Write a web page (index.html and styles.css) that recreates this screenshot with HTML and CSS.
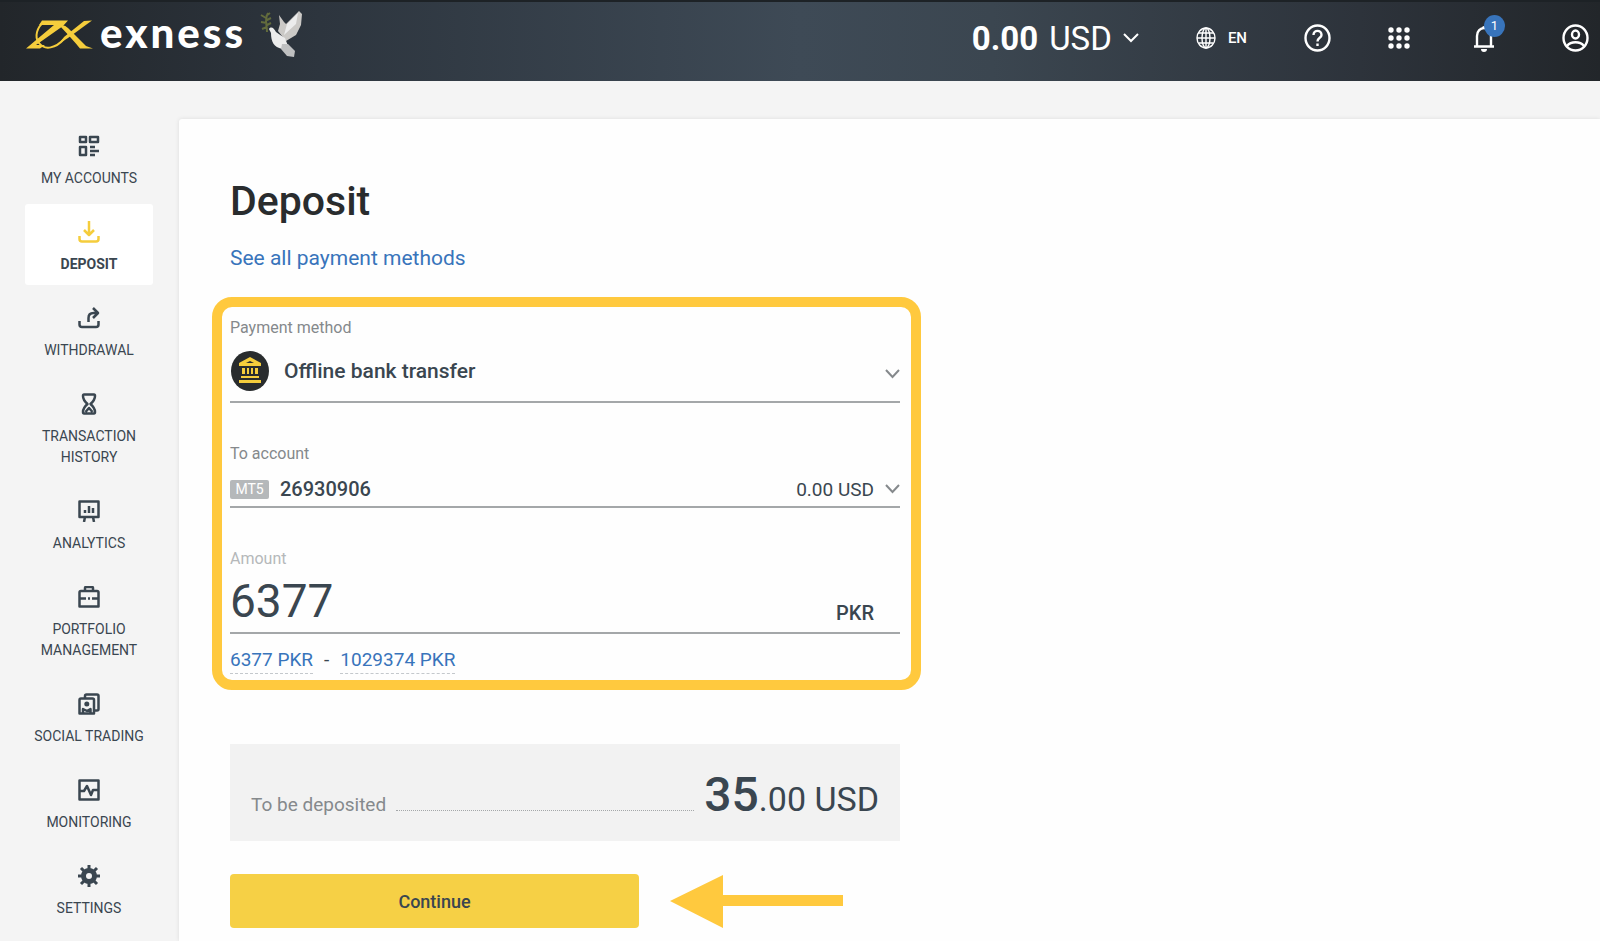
FILE: index.html
```html
<!DOCTYPE html>
<html lang="en">
<head>
    <meta charset="utf-8">
    <meta name="viewport" content="width=device-width, initial-scale=1">
    <title>Deposit</title>
    <link rel="stylesheet" href="styles.css">
</head>
<body>
    <header class="topbar">
        <a class="logo" href="#" aria-label="exness">
            <svg class="logo-mark" width="68" height="32" viewBox="26 18 68 32">
                <path d="M42 20.500H68L63 26L36 45H45L40 48.500H26L54 25H39Z" fill="#f5cd3c"/>
                <path d="M60 26Q64 24 68 28L86 46L93 48.500H80Q74 41 60 26Z" fill="#f5cd3c"/>
                <path d="M92 20.500L84 21L64 37L60 43L68 38Z" fill="#f5cd3c"/>
                <path d="M44 22C37 27 34 37 39 43C45 51 56 48 64 39" fill="none" stroke="#f5cd3c" stroke-width="2"/>
            </svg>
            <span class="logo-text">exness</span>
            <svg class="dove" width="43" height="48" viewBox="0 0 43 48">
                <path d="M18 21L20 14L19 5L24 12L26 14L39 1L42 4L41 15L36 25L26 31Z" fill="#cbc9c6"/>
                <path d="M24 25L27 14L38 3L36 14ZM9 19C11 16 14 18 16 22Q20 25 25 28L28 36L22 39C14 37 11 32 11 23Z" fill="#ececec"/>
                <path d="M22 34L28 34L35 41L34 47L27 46L21 39Z" fill="#bfc0c1"/>
                <path d="M7 22C7 14 4 10 8 3M6 8L1 5M7 13L1 12M7 17L2 19M7 10L11 8M6 6L10 3M7 15L11 13" stroke="#626b3c" stroke-width="2" fill="none"/>
            </svg>
        </a>
        <nav class="tools" aria-label="Account tools">
            <button class="balance"><b>0.00</b> USD
                <svg width="16" height="10" viewBox="0 0 16 10"><path d="M1 1L8 8L15 1"/></svg>
            </button>
            <button class="lang">
                <svg width="20" height="22" viewBox="0 0 20 22"><ellipse cx="10" cy="11" rx="9" ry="10"/><ellipse cx="10" cy="11" rx="4" ry="10"/><path d="M10 1V21M1 11H19M2.500 6H17.500M2.500 16H17.500"/></svg>
                EN
            </button>
            <button class="tool" aria-label="Help">
                <svg width="27" height="28" viewBox="0 0 27 28"><ellipse cx="13.500" cy="14" rx="12" ry="12.500"/><path d="M9.500 11C9.500 5.500 17.500 5.500 17.500 11C17.500 14 13.500 13.500 13.500 17.500M13.500 19.500V22"/></svg>
            </button>
            <button class="tool" aria-label="Apps">
                <svg class="filled" width="22" height="22" viewBox="0 0 22 22"><circle cx="3" cy="3" r="2.700"/><circle cx="11" cy="3" r="2.700"/><circle cx="19" cy="3" r="2.700"/><circle cx="3" cy="11" r="2.700"/><circle cx="11" cy="11" r="2.700"/><circle cx="19" cy="11" r="2.700"/><circle cx="3" cy="19" r="2.700"/><circle cx="11" cy="19" r="2.700"/><circle cx="19" cy="19" r="2.700"/></svg>
            </button>
            <button class="tool bell" aria-label="Notifications">
                <svg width="22" height="28" viewBox="0 0 22 28"><path d="M1 22.500H21M4 22V12C4 1.500 18 1.500 18 12V22"/><path d="M8 25H14A3 3 0 0 1 8 25ZM9 4A2 2 0 0 1 13 4Z" fill="#fff" stroke="none"/></svg>
                <span class="badge">1</span>
            </button>
            <button class="tool" aria-label="Profile">
                <svg width="27" height="28" viewBox="0 0 27 28"><ellipse cx="13.500" cy="14" rx="12" ry="12.500"/><ellipse cx="13.500" cy="10.500" rx="3.500" ry="4"/><path d="M5 22C9 17 18 17 22 22"/></svg>
            </button>
        </nav>
    </header>

    <div class="page">
        <nav class="sidebar" aria-label="Main">
            <a class="item" href="#">
                <svg width="22" height="22" viewBox="0 0 22 22"><path d="M2 2H8V7H2ZM12 2H20V7H12ZM2 12H8V20H2ZM12 12H17M12 16H21M12 20H17"/></svg>
                My accounts
            </a>
            <a class="item active" href="#" aria-current="page">
                <svg width="22" height="22" viewBox="0 0 22 22"><path d="M11 0V13M6 9L11 14L16 9M1.500 15V18Q1.500 20.500 4 20.500H18Q20.500 20.500 20.500 18V15"/></svg>
                Deposit
            </a>
            <a class="item" href="#">
                <svg width="22" height="22" viewBox="0 0 22 22"><path d="M10.500 15V11Q10.500 6 15.500 6H20M15 1L20 6L15 11M1.500 14V17.500Q1.500 20 4 20H18Q20.500 20 20.500 17.500V14"/></svg>
                Withdrawal
            </a>
            <a class="item" href="#">
                <svg width="22" height="22" viewBox="0 0 22 22"><path d="M6 1.500H16Q17 1.500 17 3Q17 7 12.500 11Q17 15 17 19Q17 20.500 16 20.500H6Q5 20.500 5 19Q5 15 9.500 11Q5 7 5 3Q5 1.500 6 1.500ZM7.500 19L11 15L14.500 19"/></svg>
                Transaction history
            </a>
            <a class="item" href="#">
                <svg width="22" height="22" viewBox="0 0 22 22"><path d="M1.500 1.500H20.500V17H1.500ZM7 17L6 22M15 17L16 22M7 10V13M11 6V13M15 8V13"/></svg>
                Analytics
            </a>
            <a class="item" href="#">
                <svg width="22" height="22" viewBox="0 0 22 22"><path d="M3 5H19Q20.500 5 20.500 6.500V20.500H1.500V6.500Q1.500 5 3 5ZM7 5V2Q7 1 8 1H14Q15 1 15 2V5M2 12.500H8M10 12.500H12M14 12.500H20"/></svg>
                Portfolio management
            </a>
            <a class="item" href="#">
                <svg width="22" height="22" viewBox="0 0 22 22"><path d="M7 5V3Q7 1.500 8.500 1.500H19Q20.500 1.500 20.500 3V16Q20.500 17.500 19 17.500H17M3 5.500H14.500Q16 5.500 16 7V20.500H1.500V7Q1.500 5.500 3 5.500Z"/><circle cx="8.800" cy="11" r="2.500" fill="#3a4650" stroke="none"/><path d="M5 20V16L9 18L12.500 16V20"/></svg>
                Social trading
            </a>
            <a class="item" href="#">
                <svg width="22" height="22" viewBox="0 0 22 22"><path d="M1.500 1.500H20.500V20.500H1.500ZM2 12H6L9 7L13 16L15 11H20"/></svg>
                Monitoring
            </a>
            <a class="item" href="#">
                <svg width="22" height="22" viewBox="0 0 22 22"><circle cx="11" cy="11" r="5.500" stroke-width="5"/><path d="M11 0V4M11 18V22M0 11H4M18 11H22M3 3L6 6M16 16L19 19M3 19L6 16M16 6L19 3" stroke-width="3"/></svg>
                Settings
            </a>
        </nav>

        <main class="panel">
            <form class="deposit">
                <h1>Deposit</h1>
                <a class="methods" href="#">See all payment methods</a>

                <div class="fields">
                    <label class="caption" for="method">Payment method</label>
                    <div class="row row-method">
                        <svg class="bank" width="38" height="40" viewBox="0 0 38 40">
                            <ellipse cx="19" cy="20" rx="19" ry="20" fill="#292c2e"/>
                            <path d="M19 6L30 12V15H8V12ZM11 17H14V23H11ZM16 17H18V23H16ZM20 17H22V23H20ZM24 17H27V23H24ZM10 25H28V27H10ZM8 29H30V32H8Z" fill="#f5cd3c"/>
                            <path d="M15 12L19 10L23 12Z" fill="#292c2e"/>
                        </svg>
                        <select id="method"><option>Offline bank transfer</option></select>
                        <svg class="chevron" width="15" height="10" viewBox="0 0 15 10"><path d="M1 1L7.500 8L14 1"/></svg>
                    </div>

                    <label class="caption" for="account">To account</label>
                    <div class="row row-account">
                        <span class="tag">MT5</span>
                        <select id="account"><option>26930906</option></select>
                        <span class="funds">0.00 USD</span>
                        <svg class="chevron" width="15" height="10" viewBox="0 0 15 10"><path d="M1 1L7.500 8L14 1"/></svg>
                    </div>

                    <label class="caption light" for="amount">Amount</label>
                    <div class="row row-amount">
                        <input id="amount" type="text" inputmode="numeric" value="6377">
                        <span class="currency">PKR</span>
                    </div>
                    <div class="limits">
                        <button type="button">6377 PKR</button>
                        <span>-</span>
                        <button type="button">1029374 PKR</button>
                    </div>
                </div>

                <div class="summary">
                    <span>To be deposited</span>
                    <span class="leader"></span>
                    <span class="total"><b>35</b>.00 USD</span>
                </div>

                <div class="actions">
                    <button class="continue" type="submit">Continue</button>
                    <svg class="arrow" width="173" height="54" viewBox="0 0 173 54"><path d="M0 27L53 1V21H173V32H53V54Z" fill="#ffc93e"/></svg>
                </div>
            </form>
        </main>
    </div>
</body>
</html>
```
FILE: styles.css
```css
* {
    box-sizing: border-box;
}
body {
    margin: 0;
    min-height: 100vh;
    display: flex;
    flex-direction: column;
    font-family: Roboto, "Liberation Sans", sans-serif;
    color: #3a4650;
    background: #f4f4f4;
}
button, select, input {
    font: inherit;
    color: inherit;
    border: none;
    background: none;
    padding: 0;
    margin: 0;
    cursor: pointer;
}
svg {
    display: block;
    flex: none;
}
a {
    text-decoration: none;
}

/* top bar */
.topbar {
    display: flex;
    justify-content: space-between;
    align-items: flex-start;
    height: 81px;
    padding: 0 11px 0 26px;
    color: #fff;
    background: linear-gradient(to right, #22262a, #2d353e 20%, #3e4a56 50%, #3b4650 62%, #2d333b 85%, #22262a);
    border-top: 2px solid #1d2226;
}
.logo {
    display: flex;
    align-items: center;
    gap: 6px;
    padding-top: 8px;
    color: #fff;
}
.logo-text {
    font-family: Lato, sans-serif;
    font-weight: 900;
    font-size: 42px;
    line-height: 40px;
    letter-spacing: 3px;
    padding-bottom: 4px;
}
.dove {
    margin-left: 8px;
}
.tools {
    display: flex;
    align-items: center;
    gap: 57px;
    height: 72px;
}
.tools svg {
    fill: none;
    stroke: #fff;
    stroke-width: 2.4;
}
.tools .filled {
    fill: #fff;
    stroke: none;
}
.balance {
    display: flex;
    align-items: center;
    gap: 11px;
    font-size: 33px;
}
.balance svg {
    stroke-width: 2;
}
.lang {
    display: flex;
    align-items: center;
    gap: 12px;
    font-size: 15px;
    font-weight: 500;
}
.lang svg {
    stroke-width: 1.4;
}
.bell {
    position: relative;
    width: 38px;
    padding-left: 6px;
}
.badge {
    position: absolute;
    top: -9px;
    right: 0;
    width: 21px;
    height: 22px;
    border-radius: 50%;
    background: #3874bb;
    font-size: 13px;
    line-height: 22px;
}

/* side menu */
.page {
    flex: 1;
    display: flex;
}
.sidebar {
    width: 179px;
    flex: none;
    display: flex;
    flex-direction: column;
    gap: 5px;
    padding: 37px 26px 0 25px;
}
.item {
    display: flex;
    flex-direction: column;
    align-items: center;
    gap: 11px;
    padding: 17px 8px 10px;
    border-radius: 3px;
    font-size: 14px;
    line-height: 21px;
    text-align: center;
    text-transform: uppercase;
    color: #3a4650;
}
.item svg {
    fill: none;
    stroke: currentColor;
    stroke-width: 2.5;
    stroke-linejoin: round;
}
.active {
    font-weight: 700;
    background: #fff;
}
.active svg {
    color: #f5cd3c;
}

/* deposit form */
.panel {
    flex: 1;
    margin-top: 38px;
    padding: 56px 51px 12px;
    background: #fefefe;
    border-radius: 3px 0 0 0;
    box-shadow: 0 0 4px rgba(0, 0, 0, 0.1);
}
.deposit {
    max-width: 670px;
}
h1 {
    margin: 0 0 18px;
    font-size: 41px;
    line-height: 52px;
    font-weight: 500;
    color: #292c2e;
}
.methods {
    display: block;
    font-size: 21px;
    line-height: 26px;
    color: #3874bb;
}
.fields {
    margin: 26px -21px 0 -18px;
    padding: 11px 11px 0 8px;
    border: 10px solid #ffc93e;
    border-radius: 20px;
}
.caption {
    display: block;
    font-size: 16px;
    line-height: 20px;
    color: #85898c;
}
.light {
    color: #b5b8ba;
}
.row {
    display: flex;
    align-items: center;
    border-bottom: 2px solid #a4a7a9;
}
.row select {
    flex: 1;
    appearance: none;
}
.row-method {
    height: 65px;
    margin-bottom: 41px;
    padding-top: 2px;
    font-size: 21px;
    font-weight: 500;
}
.bank {
    margin: 0 15px 0 1px;
}
.chevron {
    fill: none;
    stroke: #85898c;
    stroke-width: 2;
}
.row-method .chevron {
    margin-top: 6px;
}
.row-account {
    height: 44px;
    margin-bottom: 41px;
    padding-top: 8px;
    font-size: 19px;
}
.row-account select {
    font-size: 20px;
    font-weight: 500;
}
.tag {
    margin-right: 11px;
    width: 39px;
    border-radius: 2px;
    background: #b5b8ba;
    color: #fff;
    font-size: 14px;
    line-height: 19px;
    text-align: center;
}
.funds {
    margin-right: 11px;
}
.row-amount {
    height: 65px;
}
.row-amount input {
    flex: 1;
    min-width: 0;
    font-size: 46px;
}
.currency {
    align-self: flex-end;
    margin-right: 26px;
    font-size: 20px;
    line-height: 24px;
    padding-bottom: 7px;
    font-weight: 500;
}
.limits {
    display: flex;
    gap: 11px;
    padding: 13px 0 6px;
    font-size: 19px;
    line-height: 26px;
}
.limits button {
    color: #3874bb;
    border-bottom: 1px dashed #c4c8cc;
}
.summary {
    display: flex;
    align-items: baseline;
    gap: 10px;
    height: 97px;
    margin: 54px 0 33px;
    padding: 22px 21px 0;
    background: #f2f2f2;
    font-size: 19px;
    color: #85898c;
}
.leader {
    flex: 1;
    border-bottom: 1px dotted #a4a7a9;
}
.total {
    font-size: 34px;
    color: #3a4650;
}
.total b {
    font-size: 48px;
    font-weight: 500;
}
.actions {
    display: flex;
    align-items: center;
    gap: 31px;
}
.continue {
    width: 409px;
    height: 54px;
    border-radius: 4px;
    background: #f6d045;
    font-size: 18px;
    font-weight: 500;
}
```
